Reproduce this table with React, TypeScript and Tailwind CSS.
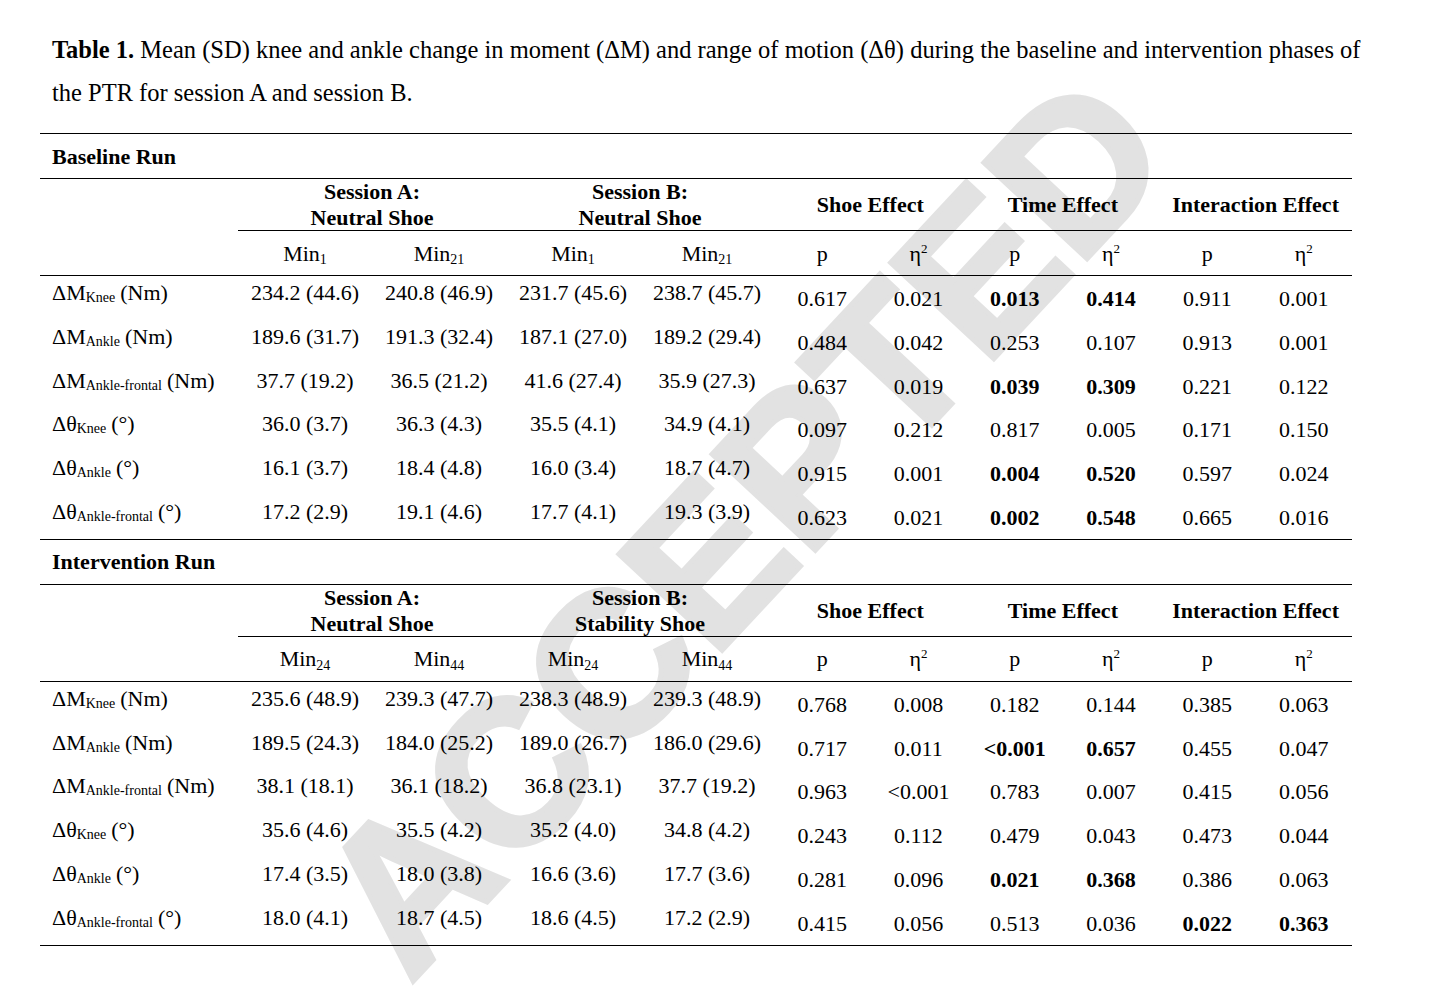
const cols = 'grid grid-cols-[198px_134px_134px_134px_134px_96.3px_96.3px_96.3px_96.3px_96.3px_96.5px]'

type Row = {
  sym: string
  sub: string
  unit: string
  mins: string[]
  stats: string[]
  bold: number[]
}

type Section = {
  title: string
  sessionB: string
  mins: [string, string]
  rows: Row[]
}

const labels = [
  { sym: 'ΔM', sub: 'Knee', unit: '(Nm)' },
  { sym: 'ΔM', sub: 'Ankle', unit: '(Nm)' },
  { sym: 'ΔM', sub: 'Ankle-frontal', unit: '(Nm)' },
  { sym: 'Δθ', sub: 'Knee', unit: '(°)' },
  { sym: 'Δθ', sub: 'Ankle', unit: '(°)' },
  { sym: 'Δθ', sub: 'Ankle-frontal', unit: '(°)' },
]

const sections: Section[] = [
  {
    title: 'Baseline Run',
    sessionB: 'Neutral Shoe',
    mins: ['1', '21'],
    rows: [
      { ...labels[0], mins: ['234.2 (44.6)', '240.8 (46.9)', '231.7 (45.6)', '238.7 (45.7)'], stats: ['0.617', '0.021', '0.013', '0.414', '0.911', '0.001'], bold: [2, 3] },
      { ...labels[1], mins: ['189.6 (31.7)', '191.3 (32.4)', '187.1 (27.0)', '189.2 (29.4)'], stats: ['0.484', '0.042', '0.253', '0.107', '0.913', '0.001'], bold: [] },
      { ...labels[2], mins: ['37.7 (19.2)', '36.5 (21.2)', '41.6 (27.4)', '35.9 (27.3)'], stats: ['0.637', '0.019', '0.039', '0.309', '0.221', '0.122'], bold: [2, 3] },
      { ...labels[3], mins: ['36.0 (3.7)', '36.3 (4.3)', '35.5 (4.1)', '34.9 (4.1)'], stats: ['0.097', '0.212', '0.817', '0.005', '0.171', '0.150'], bold: [] },
      { ...labels[4], mins: ['16.1 (3.7)', '18.4 (4.8)', '16.0 (3.4)', '18.7 (4.7)'], stats: ['0.915', '0.001', '0.004', '0.520', '0.597', '0.024'], bold: [2, 3] },
      { ...labels[5], mins: ['17.2 (2.9)', '19.1 (4.6)', '17.7 (4.1)', '19.3 (3.9)'], stats: ['0.623', '0.021', '0.002', '0.548', '0.665', '0.016'], bold: [2, 3] },
    ],
  },
  {
    title: 'Intervention Run',
    sessionB: 'Stability Shoe',
    mins: ['24', '44'],
    rows: [
      { ...labels[0], mins: ['235.6 (48.9)', '239.3 (47.7)', '238.3 (48.9)', '239.3 (48.9)'], stats: ['0.768', '0.008', '0.182', '0.144', '0.385', '0.063'], bold: [] },
      { ...labels[1], mins: ['189.5 (24.3)', '184.0 (25.2)', '189.0 (26.7)', '186.0 (29.6)'], stats: ['0.717', '0.011', '<0.001', '0.657', '0.455', '0.047'], bold: [2, 3] },
      { ...labels[2], mins: ['38.1 (18.1)', '36.1 (18.2)', '36.8 (23.1)', '37.7 (19.2)'], stats: ['0.963', '<0.001', '0.783', '0.007', '0.415', '0.056'], bold: [] },
      { ...labels[3], mins: ['35.6 (4.6)', '35.5 (4.2)', '35.2 (4.0)', '34.8 (4.2)'], stats: ['0.243', '0.112', '0.479', '0.043', '0.473', '0.044'], bold: [] },
      { ...labels[4], mins: ['17.4 (3.5)', '18.0 (3.8)', '16.6 (3.6)', '17.7 (3.6)'], stats: ['0.281', '0.096', '0.021', '0.368', '0.386', '0.063'], bold: [2, 3] },
      { ...labels[5], mins: ['18.0 (4.1)', '18.7 (4.5)', '18.6 (4.5)', '17.2 (2.9)'], stats: ['0.415', '0.056', '0.513', '0.036', '0.022', '0.363'], bold: [4, 5] },
    ],
  },
]

function Min({ n }: { n: string }) {
  return (
    <span>
      Min<sub className="text-[14px]">{n}</sub>
    </span>
  )
}

function Eta() {
  return (
    <span>
      η<sup className="text-[13px] -top-[0.6em]">2</sup>
    </span>
  )
}

function TableSection({ section }: { section: Section }) {
  const [a, b] = section.mins
  return (
    <div>
      {/* Section title */}
      <div className="h-[45px] border-t border-black flex items-center pl-3 font-bold">
        {section.title}
      </div>

      {/* Group headers */}
      <div className={`${cols} h-[52px] border-t border-black font-bold leading-[26px]`}>
        <div />
        <div className="col-span-2 flex flex-col items-center justify-center">
          <span>Session A:</span>
          <span>Neutral Shoe</span>
        </div>
        <div className="col-span-2 flex flex-col items-center justify-center">
          <span>Session B:</span>
          <span>{section.sessionB}</span>
        </div>
        <div className="col-span-2 flex items-center justify-center">Shoe Effect</div>
        <div className="col-span-2 flex items-center justify-center">Time Effect</div>
        <div className="col-span-2 flex items-center justify-center">Interaction Effect</div>
      </div>

      {/* Sub headers */}
      <div className={`${cols} h-[45px]`}>
        <div />
        {[a, b, a, b].map((n, i) => (
          <div key={i} className="border-t border-black flex items-center justify-center">
            <Min n={n} />
          </div>
        ))}
        {[0, 1, 2].map((i) => (
          <div key={i} className="contents">
            <div className="border-t border-black flex items-center justify-center">p</div>
            <div className="border-t border-black flex items-center justify-center">
              <Eta />
            </div>
          </div>
        ))}
      </div>

      {/* Data */}
      <div className="border-t border-black">
        {section.rows.map((row, r) => (
          <div key={r} className={`${cols} h-[43.8px]`}>
            <div className="flex items-center pl-3 pb-[20px] whitespace-nowrap">
              {row.sym}
              <sub className="text-[14px] -bottom-[0.4em]">{row.sub}</sub>
              <span className="ml-[5px]">{row.unit}</span>
            </div>
            {row.mins.map((v, i) => (
              <div key={i} className="flex items-center justify-center pb-[20px] whitespace-nowrap">
                {v}
              </div>
            ))}
            {row.stats.map((v, i) => (
              <div
                key={i}
                className={`flex items-center justify-center pb-2 ${row.bold.includes(i) ? 'font-bold' : ''}`}
              >
                {v}
              </div>
            ))}
          </div>
        ))}
      </div>
    </div>
  )
}

export default function App() {
  return (
    <div className="relative w-[1432px] h-[992px] overflow-hidden bg-white text-black font-['Liberation_Serif','Times_New_Roman',serif] text-[22px]">
      {/* Watermark */}
      <div className="absolute left-[742px] top-[524px] -translate-x-1/2 -translate-y-1/2 -rotate-[47deg] whitespace-nowrap font-['Liberation_Sans',Arial,sans-serif] font-bold text-[205px] leading-none text-[#e2e2e2] [-webkit-text-stroke:5px_#e2e2e2] pointer-events-none select-none">
        ACCEPTED
      </div>

      <div className="relative">
        {/* Caption */}
        <p className="pt-[28px] pl-[52px] text-[24.5px] leading-[43px] whitespace-nowrap">
          <span className="font-bold">Table 1.</span> Mean (SD) knee and ankle change in moment (ΔM) and range of motion (Δθ) during the baseline and intervention phases of
          <br />
          the PTR for session A and session B.
        </p>

        <div className="ml-[40px] mt-[19px] w-[1312px] border-b border-black">
          {sections.map((s) => (
            <TableSection key={s.title} section={s} />
          ))}
        </div>
      </div>
    </div>
  )
}
